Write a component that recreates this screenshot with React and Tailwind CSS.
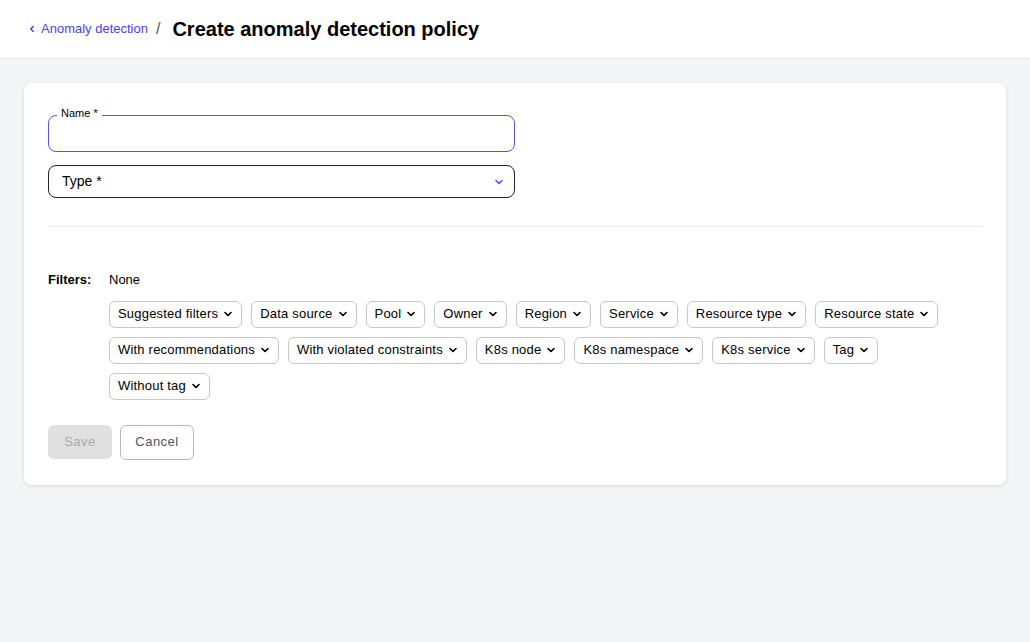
import React from "react";

const filters = [
  "Suggested filters",
  "Data source",
  "Pool",
  "Owner",
  "Region",
  "Service",
  "Resource type",
  "Resource state",
  "With recommendations",
  "With violated constraints",
  "K8s node",
  "K8s namespace",
  "K8s service",
  "Tag",
  "Without tag",
];

function Chevron({ className }) {
  return (
    <svg viewBox="0 0 10 10" className={className} fill="none" stroke="currentColor" strokeWidth="1.6" strokeLinecap="round" strokeLinejoin="round">
      <path d="M2 3.5 5 6.5 8 3.5" />
    </svg>
  );
}

function FilterChip({ label }) {
  return (
    <button className="h-[27px] px-2 flex items-center gap-[5px] border border-[#c6c7cc] rounded-md bg-white text-[13px] text-black tracking-[0.2px]">
      {label}
      <Chevron className="w-[10px] h-[10px]" />
    </button>
  );
}

export default function App() {
  return (
    <div className="min-h-[642px] bg-[#f4f5f7] font-[Liberation_Sans,Arial,sans-serif]">
      <div className="h-[59px] bg-white border-b border-[#e3e5e8] flex items-center px-[28px]">
        <a className="flex items-center gap-[5px] text-[13px] text-[#4b3ff0]">
          <svg viewBox="0 0 10 10" className="w-[8px] h-[10px]" fill="none" stroke="currentColor" strokeWidth="1.8" strokeLinecap="round" strokeLinejoin="round">
            <path d="M6.5 2 3.5 5 6.5 8" />
          </svg>
          Anomaly detection
        </a>
        <span className="ml-[8px] mr-[12px] text-[#555] text-[16px]">/</span>
        <h1 className="text-[20px] font-bold text-black">Create anomaly detection policy</h1>
      </div>

      <div className="p-[24px]">
        <div className="bg-white rounded-lg shadow-[0_1px_4px_rgba(0,0,0,0.12)] px-[24px] pt-[32px] pb-[25px]">
          <div className="w-[467px]">
            <div className="relative h-[37px] border border-[#5a4ff2] rounded-lg">
              <span className="absolute -top-[8px] left-[8px] px-[4px] bg-white text-[11px] text-black leading-none">Name *</span>
            </div>
            <div className="mt-[13px] h-[33px] border border-[#222] rounded-lg flex items-center justify-between pl-[13px] pr-[10px]">
              <span className="text-[14px] text-black">Type *</span>
              <Chevron className="w-[10px] h-[10px] text-[#5a4ff2]" />
            </div>
          </div>

          <div className="mt-[28px] border-t border-[#e6e7ea]" />

          <div className="mt-[43px] flex">
            <div className="w-[61px] text-[13px] font-bold text-black">Filters:</div>
            <div className="flex-1">
              <div className="text-[13px] text-black">None</div>
              <div className="mt-[11px] flex flex-wrap gap-x-[9px] gap-y-[9px] max-w-[840px]">
                {filters.map((f) => (
                  <FilterChip key={f} label={f} />
                ))}
              </div>
            </div>
          </div>

          <div className="mt-[25px] flex gap-[8px]">
            <button className="h-[34px] w-[64px] rounded-md bg-[#e0e0e0] text-[13px] text-[#a8a8a8] tracking-[0.5px]">Save</button>
            <button className="h-[35px] w-[74px] rounded-md border border-[#b6b9c2] bg-white text-[13px] text-[#4d5566] tracking-[0.5px]">Cancel</button>
          </div>
        </div>
      </div>
    </div>
  );
}
